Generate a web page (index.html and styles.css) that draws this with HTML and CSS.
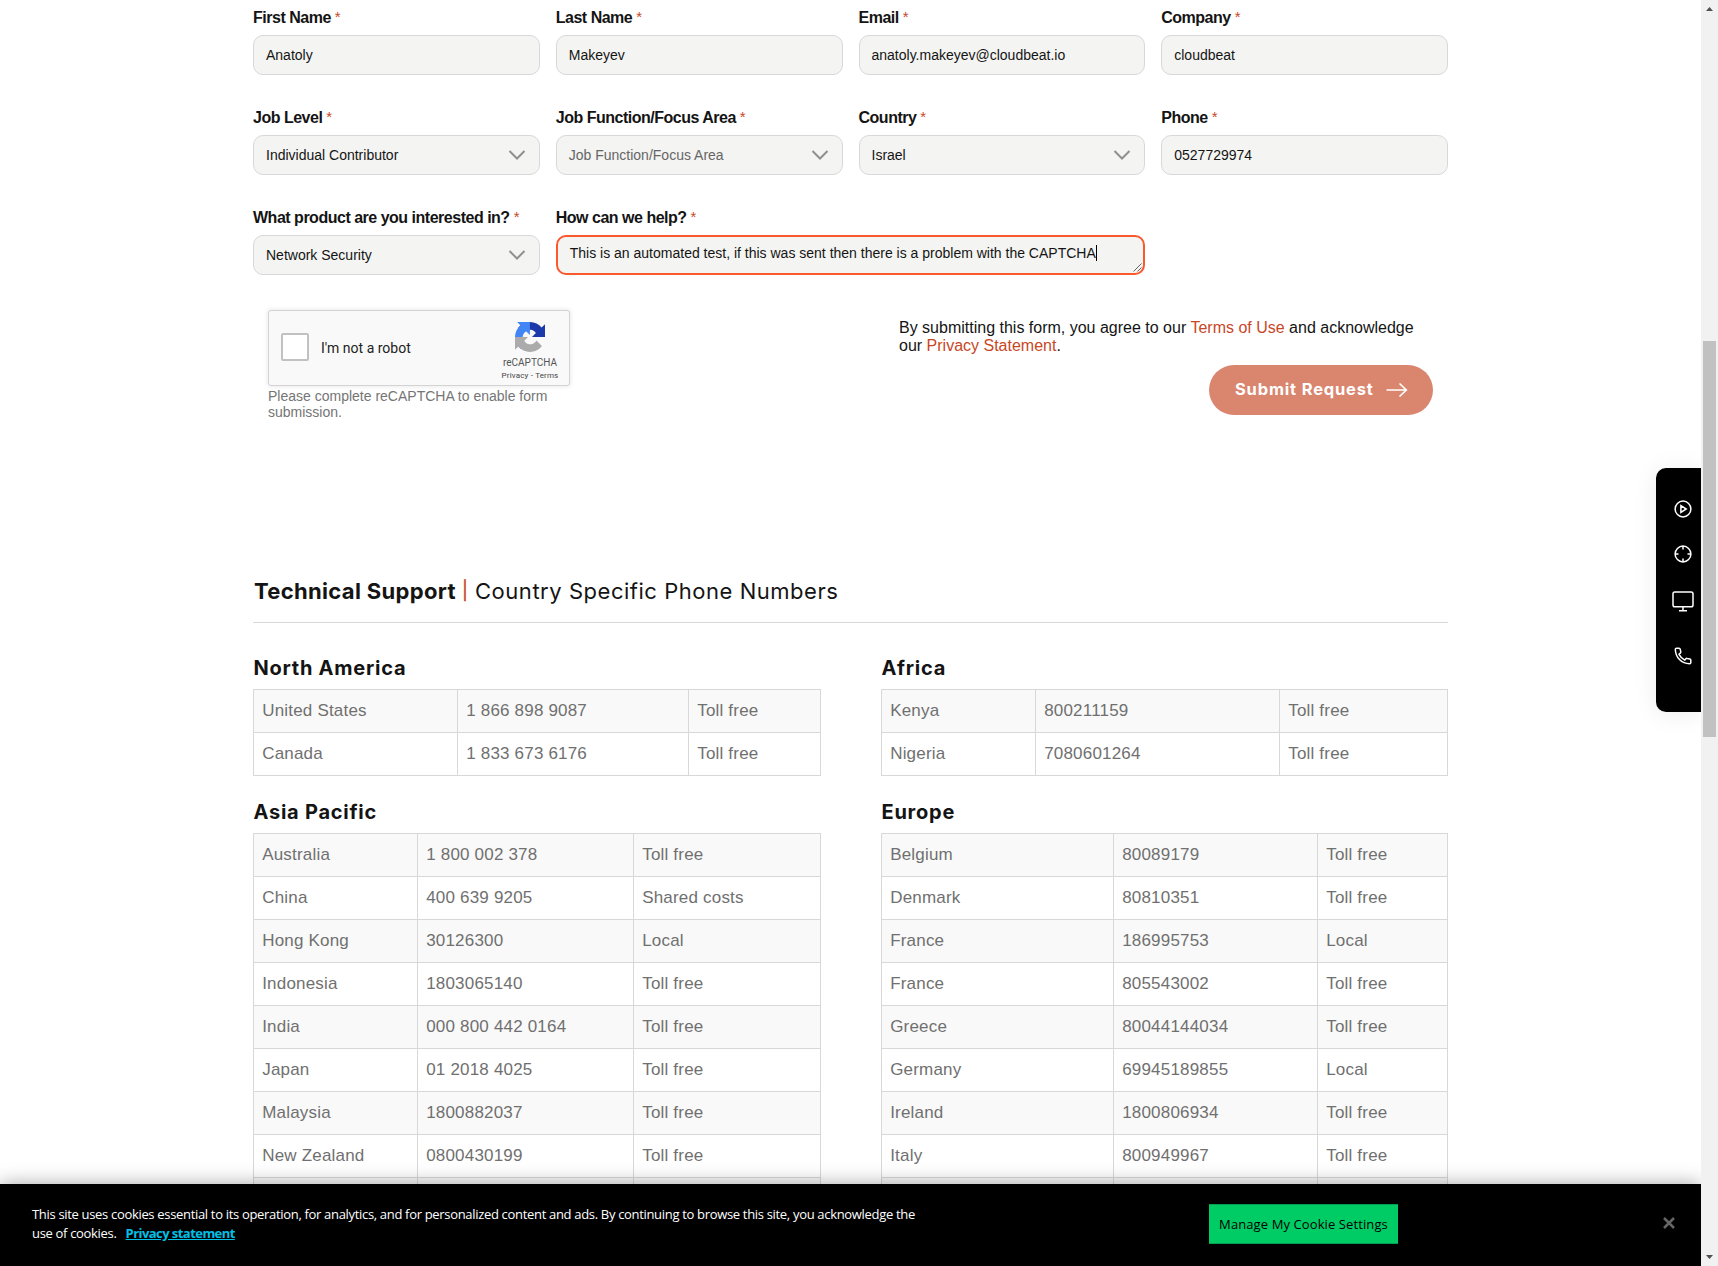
FILE: index.html
```html
<!DOCTYPE html>
<html lang="en">
<head>
<meta charset="utf-8">
<title>Contact Us</title>
<link rel="stylesheet" href="styles.css">
</head>
<body>
<div class="window">
<div class="viewport">
<main class="page">
  <form class="form">
    <div class="fields">
      <div class="field"><label class="label">First Name <i>*</i></label><div class="control">Anatoly</div></div>
      <div class="field"><label class="label">Last Name <i>*</i></label><div class="control">Makeyev</div></div>
      <div class="field"><label class="label">Email <i>*</i></label><div class="control">anatoly.makeyev@cloudbeat.io</div></div>
      <div class="field"><label class="label">Company <i>*</i></label><div class="control">cloudbeat</div></div>
      <div class="field"><label class="label">Job Level <i>*</i></label><div class="control">Individual Contributor<svg class="chevron" viewBox="0 0 18 10"><path d="M1.5 1 9 8.5 16.5 1"/></svg></div></div>
      <div class="field"><label class="label">Job Function/Focus Area <i>*</i></label><div class="control muted">Job Function/Focus Area<svg class="chevron" viewBox="0 0 18 10"><path d="M1.5 1 9 8.5 16.5 1"/></svg></div></div>
      <div class="field"><label class="label">Country <i>*</i></label><div class="control">Israel<svg class="chevron" viewBox="0 0 18 10"><path d="M1.5 1 9 8.5 16.5 1"/></svg></div></div>
      <div class="field"><label class="label">Phone <i>*</i></label><div class="control">0527729974</div></div>
      <div class="field"><label class="label">What product are you interested in? <i>*</i></label><div class="control">Network Security<svg class="chevron" viewBox="0 0 18 10"><path d="M1.5 1 9 8.5 16.5 1"/></svg></div></div>
      <div class="field wide"><label class="label">How can we help? <i>*</i></label><div class="control area">This is an automated test, if this was sent then there is a problem with the CAPTCHA<span class="caret"></span><svg class="grip" viewBox="0 0 9 9"><path d="M.5 8.5 8.5 .5M4.5 8.5 8.5 4.5"/></svg></div></div>
    </div>
    <div class="submit-row">
      <div class="captcha-col">
        <div class="captcha">
          <span class="box"></span><span class="robot">I'm not a robot</span>
          <div class="brand">
            <svg width="30" height="30" viewBox="0 0 64 64"><path fill="#1c3aa9" d="M64 31.955l-.033-1.370V4.687l-7.160 7.160C50.948 4.674 42.033.093 32.050.093c-10.390 0-19.622 4.960-25.453 12.650l11.736 11.860c1.150-2.127 2.784-3.954 4.737-5.313 2.016-1.573 4.873-2.859 8.800-2.859.474 0 .840.055 1.109.160 4.860.383 9.075 3.066 11.556 6.960l-8.307 8.307 27.771.100"/><path fill="#4285f4" d="M31.862.094l-1.370.033H4.594l7.160 7.160C4.580 13.147 0 22.060 0 32.046c0 10.390 4.960 19.622 12.650 25.454l11.860-11.736c-2.127-1.150-3.954-2.784-5.313-4.737-1.573-2.016-2.859-4.873-2.859-8.800 0-.474.055-.840.160-1.109.383-4.860 3.066-9.075 6.960-11.556l8.307 8.307.100-27.771"/><path fill="#ababab" d="M.001 32.045l.033 1.370v25.898l7.160-7.160c5.860 7.173 14.774 11.754 24.760 11.754 10.390 0 19.622-4.960 25.453-12.650L45.672 39.400c-1.150 2.127-2.784 3.954-4.737 5.313-2.016 1.573-4.873 2.859-8.800 2.859-.474 0-.840-.055-1.109-.160-4.860-.383-9.075-3.066-11.556-6.960l8.307-8.307-27.771-.100"/></svg>
            <span class="rc">reCAPTCHA</span><span class="pt">Privacy&nbsp;-&nbsp;Terms</span>
          </div>
        </div>
        <p class="note">Please complete reCAPTCHA to enable form submission.</p>
      </div>
      <div class="agree">
        <p class="terms">By submitting this form, you agree to our <a>Terms of Use</a> and acknowledge our <a>Privacy Statement</a>.</p>
        <div class="submit"><span>Submit Request</span><svg width="22" height="16" viewBox="0 0 22 16"><path d="M.5 8H20M13.5 1.5 20.3 8 13.5 14.5"/></svg></div>
      </div>
    </div>
  </form>
  <h2 class="title"><b>Technical Support</b><em>|</em><span>Country Specific Phone Numbers</span></h2>
  <div class="columns">
    <section class="column">
      <h3 class="region">North America</h3>
      <table class="phones"><colgroup><col class="w204"><col class="w231"><col></colgroup>
        <tr><td>United States</td><td>1 866 898 9087</td><td>Toll free</td></tr>
        <tr><td>Canada</td><td>1 833 673 6176</td><td>Toll free</td></tr>
      </table>
      <h3 class="region next">Asia Pacific</h3>
      <table class="phones"><colgroup><col class="w164"><col class="w216"><col></colgroup>
        <tr><td>Australia</td><td>1 800 002 378</td><td>Toll free</td></tr>
        <tr><td>China</td><td>400 639 9205</td><td>Shared costs</td></tr>
        <tr><td>Hong Kong</td><td>30126300</td><td>Local</td></tr>
        <tr><td>Indonesia</td><td>1803065140</td><td>Toll free</td></tr>
        <tr><td>India</td><td>000 800 442 0164</td><td>Toll free</td></tr>
        <tr><td>Japan</td><td>01 2018 4025</td><td>Toll free</td></tr>
        <tr><td>Malaysia</td><td>1800882037</td><td>Toll free</td></tr>
        <tr><td>New Zealand</td><td>0800430199</td><td>Toll free</td></tr>
        <tr><td></td><td></td><td></td></tr>
      </table>
    </section>
    <section class="column">
      <h3 class="region">Africa</h3>
      <table class="phones"><colgroup><col class="w154"><col class="w244"><col></colgroup>
        <tr><td>Kenya</td><td>800211159</td><td>Toll free</td></tr>
        <tr><td>Nigeria</td><td>7080601264</td><td>Toll free</td></tr>
      </table>
      <h3 class="region next">Europe</h3>
      <table class="phones"><colgroup><col class="w232"><col class="w204"><col></colgroup>
        <tr><td>Belgium</td><td>80089179</td><td>Toll free</td></tr>
        <tr><td>Denmark</td><td>80810351</td><td>Toll free</td></tr>
        <tr><td>France</td><td>186995753</td><td>Local</td></tr>
        <tr><td>France</td><td>805543002</td><td>Toll free</td></tr>
        <tr><td>Greece</td><td>80044144034</td><td>Toll free</td></tr>
        <tr><td>Germany</td><td>69945189855</td><td>Local</td></tr>
        <tr><td>Ireland</td><td>1800806934</td><td>Toll free</td></tr>
        <tr><td>Italy</td><td>800949967</td><td>Toll free</td></tr>
        <tr><td></td><td></td><td></td></tr>
      </table>
    </section>
  </div>
</main>
<nav class="side">
  <svg width="18" height="18" viewBox="0 0 18 18"><circle cx="9" cy="9" r="7.9"/><path d="M6.9 5.7v6.6L12.2 9z"/></svg>
  <svg width="18" height="18" viewBox="0 0 18 18"><circle cx="9" cy="9" r="7.9"/><path d="M9 1v3.5M9 13.5V17M1 9h3.5M13.5 9H17"/></svg>
  <svg width="22" height="21" viewBox="0 0 22 21"><rect x="1" y="1" width="20" height="14.8" rx="1.8"/><path d="M11 16v3.5M7 19.7h8"/></svg>
  <svg width="18" height="18" viewBox="0 0 18 18"><path d="M1.3 2.2Q1.5 1.3 2.4 1.2H5Q6 1.2 6.2 2.2L6.8 4.9Q6.9 5.7 6.3 6.2L5 7.3Q7 11.2 10.8 13.1L11.9 11.8Q12.4 11.2 13.2 11.4L16 12Q16.8 12.2 16.8 13.1V15.7Q16.7 16.7 15.7 16.8Q9.5 16.7 5.5 12.6T1.3 2.2Z"/></svg>
</nav>
<footer class="cookies">
  <p class="cookie-text">This site uses cookies essential to its operation, for analytics, and for personalized content and ads. By continuing to browse this site, you acknowledge the<br><span>use of cookies.</span><a>Privacy statement</a></p>
  <div class="manage">Manage My Cookie Settings</div>
  <svg class="close" width="14" height="14" viewBox="0 0 14 14"><path d="M2 2l10 10M12 2 2 12"/></svg>
</footer>
</div>
<div class="scrollbar">
  <svg width="7" height="4" viewBox="0 0 7 4"><path d="M0 4 3.5 0 7 4z"/></svg>
  <div class="thumb"></div>
  <svg class="down" width="7" height="4" viewBox="0 0 7 4"><path d="M0 0h7L3.5 4z"/></svg>
</div>
</div>
</body>
</html>
```
FILE: styles.css
```css
* { box-sizing: border-box; }
body { margin: 0; background: #fff; font-family: "Liberation Sans", Arial, sans-serif; color: #141414; }
p, h2, h3 { margin: 0; font-weight: normal; }
svg { fill: none; display: block; flex: none; }
.window { display: flex; width: 1718px; height: 1266px; overflow: hidden; }
.viewport { position: relative; width: 1701px; height: 1266px; display: flex; flex-direction: column; overflow: hidden; }
.page { flex: 1; min-height: 0; overflow: hidden; padding: 8px 0 0 253px; }

.form { height: 562px; width: 1195px; }
.fields { display: grid; grid-template-columns: repeat(4, 1fr); column-gap: 16px; row-gap: 33px; }
.wide { grid-column: span 2; }
.label { display: block; height: 27px; font-size: 16px; line-height: 19px; font-weight: 700; letter-spacing: -.49px; white-space: nowrap; }
.label i { font-style: normal; font-weight: 400; color: #c84727; letter-spacing: 0; font-size: 15px; line-height: 1; vertical-align: 1px; }
.control { height: 40px; border: 1px solid #d8d8d8; border-radius: 10px; background: #f4f4f2; padding: 0 13px 0 12px; font-size: 14px; display: flex; align-items: center; white-space: nowrap; }
.muted { color: #666; }
.chevron { width: 18px; height: 10px; margin-left: auto; stroke: #8f8f8f; stroke-width: 2; }
.area { position: relative; border: 2px solid #fa582d; padding-bottom: 4px; }
.caret { width: 1px; height: 16px; background: #000; }
.grip { position: absolute; right: 1px; bottom: 1px; width: 9px; height: 9px; stroke: #555; stroke-width: .9; }

.submit-row { display: flex; justify-content: space-between; padding: 35px 15px 0; }
.captcha-col { width: 304px; }
.captcha { width: 302px; height: 76px; border: 1px solid #d3d3d3; border-radius: 3px; background: #f9f9f9; box-shadow: 0 0 4px 1px rgba(0,0,0,.08); display: flex; align-items: center; font-family: Roboto, sans-serif; padding-left: 12px; }
.box { width: 28px; height: 28px; border: 2px solid #c1c1c1; border-radius: 2px; background: #fff; margin-top: -2px; }
.robot { font-size: 14px; margin-left: 12px; color: #222; }
.brand { margin-left: auto; width: 78px; display: flex; flex-direction: column; align-items: center; color: #555; }
.brand svg { margin-top: 7px; }
.rc { font-size: 10px; line-height: 12px; margin-top: 5px; }
.pt { font-size: 8px; line-height: 10px; margin-top: 2px; color: #444; letter-spacing: .15px; }
.note { font-size: 14px; line-height: 16px; color: #757575; margin-top: 2px; }
.agree { width: 534px; display: flex; flex-direction: column; }
.terms { font-size: 16px; line-height: 18px; padding-top: 9px; color: #141414; }
.terms a { color: #c84727; }
.submit { align-self: flex-end; margin-top: 10px; width: 224px; height: 50px; border-radius: 25px; background: #da856e; color: #fff; display: flex; align-items: center; padding-left: 26px; font: 700 16.5px Inter, sans-serif; letter-spacing: .82px; }
.submit span { width: 151px; white-space: nowrap; padding-bottom: 2px; }
.submit svg { stroke: #fff; stroke-width: 1.7; }

.title { width: 1195px; height: 53px; border-bottom: 1px solid #d8d8d8; display: flex; font: 400 22px/42px Inter, sans-serif; white-space: nowrap; letter-spacing: .53px; }
.title b { width: 209px; font-weight: 700; letter-spacing: .33px; padding-left: 1px; }
.title em { width: 13px; font-style: normal; font-size: 18px; color: #c84727; -webkit-text-stroke: .4px #c84727; }
.columns { display: flex; gap: 60px; padding-top: 33px; }
.column { width: 568px; }
.column + .column { width: 567px; }
.region { height: 33px; font: 700 20px/25px Inter, sans-serif; letter-spacing: .75px; padding-left: .5px; }
.next { height: 57px; padding-top: 24px; }
.phones { table-layout: fixed; width: 100%; border-collapse: collapse; color: #707070; font-size: 17px; letter-spacing: .19px; }
.phones td { border: 1px solid #d8d8d8; height: 43px; padding: 0 8px 0 8.2px; white-space: nowrap; }
.phones tr:nth-child(odd) td { background: #f9f9f9; }
.w154 { width: 154px; }
.w164 { width: 164px; }
.w204 { width: 204px; }
.w216 { width: 216px; }
.w231 { width: 231px; }
.w232 { width: 232px; }
.w244 { width: 244px; }

.side { position: absolute; top: 468px; right: 0; width: 45px; height: 244px; background: #000; border-radius: 10px 0 0 10px; box-shadow: 0 2px 24px rgba(0,0,0,.08); display: flex; flex-direction: column; align-items: center; padding: 32px 0 0 9px; }
.side svg { stroke: #fff; stroke-width: 1.5; }
.side svg:nth-child(2) { margin-top: 27px; }
.side svg:nth-child(3) { margin-top: 28px; }
.side svg:nth-child(4) { margin-top: 35px; }

.cookies { position: relative; flex: none; height: 82px; background: #000; box-shadow: 0 0 18px rgba(0,0,0,.35); display: flex; color: #fff; font-family: "Open Sans", sans-serif; }
.cookie-text { margin: 21px 0 0 32px; width: 1177px; font-size: 13px; line-height: 19px; font-weight: 500; white-space: nowrap; letter-spacing: -.32px; }
.cookie-text span { margin-right: 9px; }
.cookie-text a { color: #00c0e8; font-weight: 700; text-decoration: underline; letter-spacing: -.55px; }
.manage { width: 189px; height: 40px; margin-top: 20px; background: #00cc66; border: solid #00a050; border-width: 1px 0; color: #000; font-size: 13px; line-height: 38px; text-align: center; white-space: nowrap; letter-spacing: .1px; }
.close { margin: 32px 0 0 264px; stroke: #666; stroke-width: 2.5; }

.scrollbar { width: 17px; background: #f1f1f1; display: flex; flex-direction: column; align-items: center; padding: 7px 0; }
.scrollbar svg { fill: #505050; }
.thumb { width: 13px; height: 396px; margin-top: 330px; background: #c1c1c1; }
.down { margin-top: auto; }
```
